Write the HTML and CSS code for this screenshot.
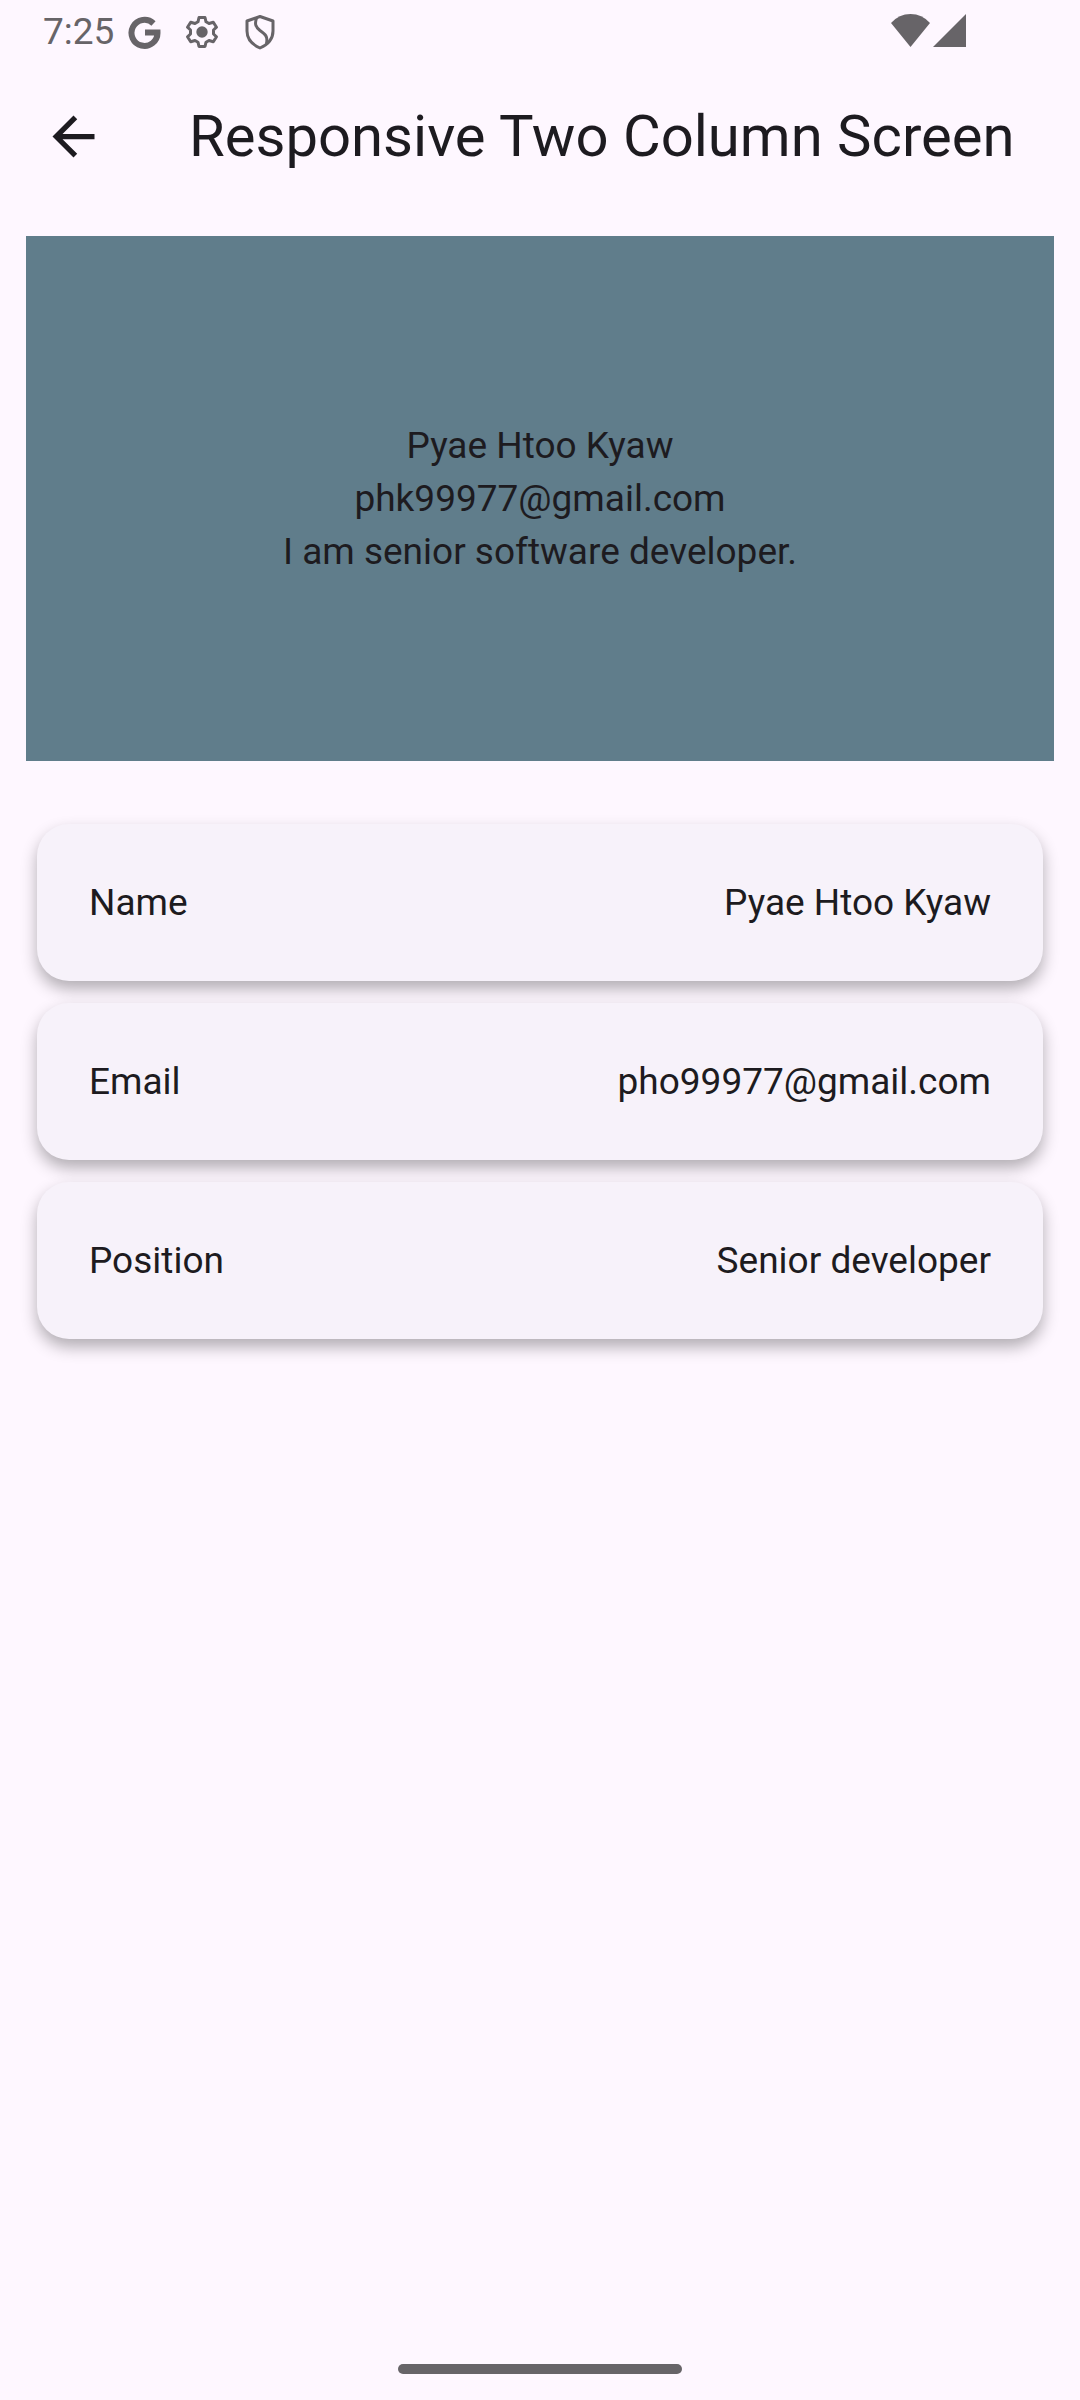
FILE: index.html
```html
<!DOCTYPE html>
<html lang="en">
<head>
<meta charset="utf-8">
<meta name="viewport" content="width=device-width, initial-scale=1">
<title>Responsive Two Column Screen</title>
<link rel="stylesheet" href="styles.css">
</head>
<body>
<div class="status-bar">
  <div class="status-left">
    <time class="clock">7:25</time>
    <svg class="status-icon" viewBox="0 0 36 36" aria-hidden="true"><path d="M27.500 9.500A13 13 0 1 0 31.500 18.500H19" fill="none" stroke="currentColor" stroke-width="6"/></svg>
    <svg class="status-icon" viewBox="0 0 36 36" aria-hidden="true"><path d="M15 3.500h6l1 4.300 3 1.700 4.300-1.300 3.200 5-3 2.800v4l3 2.800-3.200 5-4.300-1.300-3 1.700-1 4.300h-6l-1-4.300-3-1.700-4.300 1.300-3.200-5 3-2.800v-4l-3-2.800 3.200-5 4.300 1.300 3-1.700z" fill="none" stroke="currentColor" stroke-width="3" stroke-linejoin="round"/><circle cx="18" cy="18" r="5.700" fill="currentColor"/></svg>
    <svg class="status-icon" viewBox="0 0 36 36" aria-hidden="true"><g fill="none" stroke="currentColor" stroke-width="3" stroke-linejoin="round"><path d="M18 2.500 31 7v10c0 8-5 13.500-13 17C10 30.500 5 25 5 17V7z"/><path d="M14.500 4c-2 6-1 9 3.500 12.500 5.500 4 8 6 6.500 13"/></g></svg>
  </div>
  <div class="status-right">
    <svg class="wifi-icon" viewBox="0 0 39 33" aria-hidden="true"><path d="M0 9Q8 0 19.500 0T39 9L19.500 33z" fill="currentColor"/></svg>
    <svg class="signal-icon" viewBox="0 0 33 33" aria-hidden="true"><path d="M33 0v33H0z" fill="currentColor"/></svg>
  </div>
</div>
<header class="app-bar">
  <button class="back-button" type="button" aria-label="Back">
    <svg class="back-icon" viewBox="0 0 24 24" aria-hidden="true"><path d="M20 11H7.830l5.590-5.590L12 4l-8 8 8 8 1.410-1.410L7.830 13H20v-2z" fill="currentColor"/></svg>
  </button>
  <h1 class="title">Responsive Two Column Screen</h1>
</header>
<main class="content">
  <section class="profile">
    <p>Pyae Htoo Kyaw</p>
    <p>phk99977@gmail.com</p>
    <p>I am senior software developer.</p>
  </section>
  <dl class="details">
    <div class="card"><dt>Name</dt><dd>Pyae Htoo Kyaw</dd></div>
    <div class="card"><dt>Email</dt><dd>pho99977@gmail.com</dd></div>
    <div class="card"><dt>Position</dt><dd>Senior developer</dd></div>
  </dl>
</main>
<footer class="nav-bar"><div class="nav-handle"></div></footer>
</body>
</html>
```

FILE: styles.css
```css
* {
  box-sizing: border-box;
}

body {
  margin: 0;
  min-height: 100vh;
  display: flex;
  flex-direction: column;
  background: #fef7ff;
  color: #1d1b20;
  font-family: Roboto, sans-serif;
  font-size: 37px;
  line-height: 53px;
}

h1, p, dl, dd {
  margin: 0;
}

.status-bar {
  display: flex;
  justify-content: space-between;
  height: 63px;
  padding: 0 114px 0 43px;
  color: #676468;
}

.status-left {
  display: flex;
  align-items: center;
  gap: 22px;
}

.clock {
  margin-right: -10px;
}

.status-icon {
  width: 36px;
  height: 36px;
}

.status-right {
  display: flex;
  align-items: flex-start;
  gap: 3px;
  padding-top: 14px;
}

.wifi-icon {
  width: 39px;
  height: 33px;
}

.signal-icon {
  width: 33px;
  height: 33px;
}

.app-bar {
  display: flex;
  align-items: center;
  gap: 42px;
  height: 147px;
}

.back-button {
  display: flex;
  align-items: center;
  justify-content: center;
  width: 147px;
  height: 147px;
  padding: 0;
  border: 0;
  background: none;
  color: inherit;
}

.back-icon {
  width: 63px;
  height: 63px;
}

.title {
  font-size: 58px;
  font-weight: 400;
  line-height: 73px;
}

.content {
  flex: 1;
  display: flex;
  flex-direction: column;
  gap: 63px;
  padding: 26px;
}

.profile {
  display: flex;
  flex-direction: column;
  justify-content: center;
  min-height: 525px;
  background: #607d8b;
  text-align: center;
}

.details {
  display: flex;
  flex-direction: column;
  gap: 22px;
  padding: 0 11px;
}

.card {
  display: flex;
  justify-content: space-between;
  gap: 24px;
  padding: 52px;
  border-radius: 32px;
  background: #f7f2fa;
  box-shadow: 0 8px 16px rgba(0, 0, 0, 0.3);
}

.nav-bar {
  display: flex;
  justify-content: center;
  padding-bottom: 26px;
}

.nav-handle {
  width: 284px;
  height: 10px;
  border-radius: 5px;
  background: #676468;
}
```
